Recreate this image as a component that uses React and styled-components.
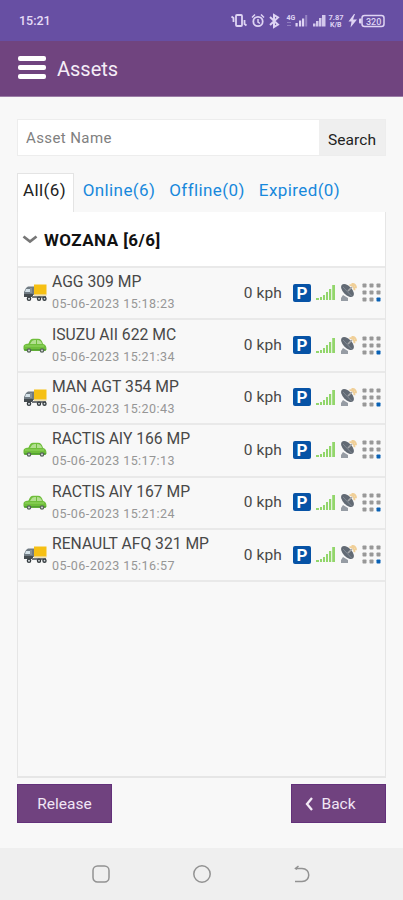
import React from "react";
import styled, { createGlobalStyle } from "styled-components";

const GlobalStyle = createGlobalStyle`
  * { box-sizing: border-box; }
  body { margin: 0; background: #f8f8f8; font-family: Roboto, "Liberation Sans", sans-serif; }
  button, input { font-family: inherit; border-radius: 0; margin: 0; }
  svg { display: block; flex: none; }
`;

const Screen = styled.div`
  width: 403px;
  height: 900px;
  display: flex;
  flex-direction: column;
  background: #f8f8f8;
  overflow: hidden;
`;

const StatusBar = styled.div`
  height: 41px;
  flex: none;
  background: #674fa3;
  color: #e6dcf7;
  display: flex;
  align-items: center;
  justify-content: space-between;
  padding: 0 17px 0 19px;
`;

const Clock = styled.span`
  font-size: 12.5px;
  line-height: 16px;
  font-weight: 500;
`;

const Header = styled.header`
  height: 56px;
  flex: none;
  background: #70447f;
  border-bottom: 1px solid #9b7da6;
  display: flex;
  align-items: center;
  gap: 11px;
  padding: 0 18px;
`;

const MenuButton = styled.button`
  width: 28px;
  padding: 0;
  border: 0;
  background: none;
  display: grid;
  gap: 4px;
  margin-top: -2px;
`;

const MenuBar = styled.span`
  height: 5px;
  border-radius: 2px;
  background: #fff;
`;

const Title = styled.h1`
  margin: 0;
  font-size: 20px;
  line-height: 24px;
  font-weight: 400;
  color: #f5edf7;
`;

const Content = styled.main`
  flex: 1;
  min-height: 0;
  display: flex;
  flex-direction: column;
  padding: 22px 17px 25px;
`;

const SearchBar = styled.div`
  height: 37px;
  flex: none;
  display: flex;
  border: 1px solid #ededed;
`;

const SearchInput = styled.input`
  flex: 1;
  min-width: 0;
  border: 0;
  padding: 0 8px 0;
  background: #fff;
  font-size: 15px;
  letter-spacing: 0.4px;
  color: #444;
  &::placeholder { color: #808080; opacity: 1; }
`;

const SearchButton = styled.button`
  width: 66px;
  border: 0;
  padding: 5px 0 0;
  background: #efefef;
  color: #222;
  font-size: 15.5px;
  letter-spacing: 0.1px;
`;

const Tabs = styled.nav`
  display: flex;
  flex: none;
  height: 39px;
  margin-top: 17px;
`;

const Tab = styled.button`
  width: ${(p) => p.$width}px;
  border: 1px solid ${(p) => (p.$active ? "#e4e4e4" : "transparent")};
  border-bottom: 0;
  padding: 0 ${(p) => (p.$active ? 2 : 0)}px 6px 0;
  background: ${(p) => (p.$active ? "#fff" : "transparent")};
  color: ${(p) => (p.$active ? "#222" : "#1788dc")};
  font-size: 17px;
  letter-spacing: 0.4px;
  white-space: nowrap;
`;

const Panel = styled.section`
  flex: 1;
  min-height: 0;
  border: 1px solid #e6e6e6;
  border-top: 0;
  border-bottom-width: 2px;
`;

const GroupHeader = styled.div`
  height: 54px;
  background: #fff;
  display: flex;
  align-items: center;
  gap: 6px;
  padding: 1px 4px 0;
`;

const GroupName = styled.span`
  font-size: 17px;
  line-height: 20px;
  font-weight: 700;
  letter-spacing: 0.45px;
  color: #111;
`;

const Row = styled.div`
  height: 52.4px;
  border-top: 2px solid #e9e9e9;
  display: flex;
  align-items: center;
  padding: 0 4px 0 5px;
`;

const RowEnd = styled.div`
  height: 2px;
  background: #e9e9e9;
`;

const Vehicle = styled.div`
  width: 24px;
  margin-right: 5px;
`;

const Details = styled.div`
  flex: 1;
  min-width: 0;
  white-space: nowrap;
`;

const AssetName = styled.div`
  font-size: 15.7px;
  line-height: 22px;
  margin-top: -2px;
  color: #484848;
`;

const Timestamp = styled.div`
  font-size: 12.5px;
  line-height: 19px;
  letter-spacing: 0.45px;
  margin-top: 1px;
  color: #969696;
`;

const Speed = styled.span`
  font-size: 15.5px;
  letter-spacing: 0.1px;
  line-height: 20px;
  margin: -1px 11px 0 0;
  color: #484848;
`;

const Indicators = styled.div`
  display: flex;
  align-items: center;
  gap: 5px;
  margin-top: -1px;
`;

const Parking = styled.span`
  width: 18px;
  height: 18px;
  border-radius: 2px;
  background: #0753a6;
  color: #fff;
  font-size: 17px;
  line-height: 18px;
  font-weight: 700;
  text-align: center;
`;

const Actions = styled.div`
  display: flex;
  justify-content: space-between;
  flex: none;
  margin-top: 6px;
`;

const ActionButton = styled.button`
  width: 95px;
  height: 39px;
  border: 1px solid #63317a;
  padding: 0;
  background: #70427f;
  color: #f1e6f5;
  font-size: 15.5px;
  display: flex;
  align-items: center;
  justify-content: center;
  gap: 8px;
`;

const BackLabel = styled.span`
  margin-right: 16px;
`;

const SystemNav = styled.footer`
  height: 52px;
  flex: none;
  background: #efefef;
  display: flex;
  justify-content: center;
  align-items: center;
  gap: 80px;
`;

function StatusIcons() {
  return (
    <svg width="156" height="20" viewBox="230 11 156 20" fill="none" stroke="#ded4f3" strokeWidth="1.5" fontFamily="Roboto, sans-serif">
      <rect x="236" y="15" width="6" height="11" rx="1" strokeWidth="1.8" />
      <path d="M231.500 16.500l2 1.500v4M246.500 25.500l-2-1.500v-4" strokeWidth="1.8" />
      <circle cx="258" cy="21.500" r="4.700" strokeWidth="1.800" />
      <path d="M258 19v3l2 1.500M252 17.500l3-3M264 17.500l-3-3" />
      <path d="M270 17l8 7.500-4 2.500V15l4 2.500-8 7.500" strokeWidth="2" />
      <g fill="#ded4f3" stroke="none">
        <text x="286.500" y="20" fontSize="7" fontWeight="700">4G</text>
        <path d="M295.500 23h2.200v3.500h-2.200zM299 20.500h2.200v6H299zM302 18.500h2.200v8H302z" />
        <path d="M305.200 15h2v11.500h-2z" opacity=".4" />
        <path d="M287 22h4v1h-4zM287 25h4v1h-4z" opacity=".35" />
        <path d="M313 23.500h2.500v3H313zM316 21h2.500v5.500H316zM319 18h2.500v8.500H319zM322 15h3.500v11.500H322z" opacity=".9" />
        <text x="328.500" y="20" fontSize="7.500" fontWeight="700">7.87</text>
        <text x="330" y="27" fontSize="7" fontWeight="700">K/B</text>
        <path d="M354 14l-5.500 7.500h3l-1 6 6.500-8h-4l2-5.500z" />
        <rect x="359" y="18.500" width="2.500" height="5" rx="1" />
        <text x="366" y="24.500" fontSize="9" fontWeight="500">320</text>
      </g>
      <rect x="362" y="15.500" width="22" height="11" rx="2.500" />
    </svg>
  );
}

function Truck() {
  return (
    <svg width="24" height="18" viewBox="0 0 24 18">
      <path d="M3 4l2-1.500h6V11H1V8z" fill="#707b83" />
      <path d="M3 5h4v3H2z" fill="#d4e1e8" />
      <path d="M7.500 4h1v5h-1z" fill="#a4adb3" />
      <path d="M1 10h9v3H1z" fill="#454c50" />
      <path d="M9 12h14v2H9z" fill="#73777a" />
      <path d="M11 .5h12.500v10H11z" fill="#f6c014" />
      <path d="M11 10.500h12.500v1H11z" fill="#e4ca77" />
      <g fill="#333a3e"><circle cx="6" cy="14.700" r="2.300" /><circle cx="16" cy="14.700" r="2.200" /><circle cx="21.500" cy="14.700" r="2.200" /></g>
      <g fill="#d7dde0"><circle cx="6" cy="14.700" r="1" /><circle cx="16" cy="14.700" r=".9" /><circle cx="21.500" cy="14.700" r=".9" /></g>
    </svg>
  );
}

function Car() {
  return (
    <svg width="24" height="16" viewBox="0 0 24 16">
      <path d="M.5 9c0-3 3-3 5-3.500C7 2 8 .8 10 .8h5c3 0 4 2 5 5 3 1 3.500 3 3.500 6L22 13H2C0 12 .5 10 .5 9z" fill="#6fbe3b" />
      <path d="M7 6l2-3c1-1 2-1 4-1v4zM14 2c3 0 4 1 5 4h-5z" fill="#b3df91" />
      <path d="M2 8h19" stroke="#96d765" />
      <path d="M1 11h22v1.500H1z" fill="#54a034" />
      <g fill="#56625a"><circle cx="6" cy="12.500" r="2.300" /><circle cx="19" cy="12.500" r="2.300" /></g>
      <g fill="#cad0cc"><circle cx="6" cy="12.500" r="1.100" /><circle cx="19" cy="12.500" r="1.100" /></g>
    </svg>
  );
}

function SignalBars() {
  return (
    <svg width="19" height="17" viewBox="0 0 19 17" fill="#92d66b">
      <path d="M0 14h3v2H0zM4 13h2v3H4zM7 11h2v5H7zM10 8h2v8h-2zM13 5h2.200v11H13zM16.200 1H19v15h-2.800z" />
    </svg>
  );
}

function Satellite() {
  return (
    <svg width="17" height="19" viewBox="0 0 17 19">
      <path d="M1 15l2-3 5 3v3H1z" fill="#969ca4" />
      <ellipse cx="7.500" cy="7.500" rx="8" ry="4.400" transform="rotate(46 7.500 7.500)" fill="#626a74" />
      <path d="M3 4l8.500 9" stroke="#818a94" strokeWidth="1" />
      <path d="M8 8l4-4" stroke="#a5a7aa" strokeWidth="1.700" />
      <path d="M9.500 2.200c3-.5 5 1.500 5 5M11.500 .8c3 0 4.500 1.500 4.500 4.500" fill="none" stroke="#f0cf97" strokeWidth="1.900" />
    </svg>
  );
}

function MoreGrid() {
  return (
    <svg width="19" height="19" viewBox="0 0 19 19">
      {[0, 1, 2].flatMap((y) => [0, 1, 2].map((x) => (
        <rect key={`${x}-${y}`} x={0.5 + x * 7} y={0.5 + y * 7} width="4" height="4" rx=".8" fill={x === 2 && y === 2 ? "#0861b5" : "#989898"} />
      )))}
    </svg>
  );
}

const assets = [
  { name: "AGG 309 MP", time: "05-06-2023 15:18:23", truck: true },
  { name: "ISUZU AII 622 MC", time: "05-06-2023 15:21:34" },
  { name: "MAN AGT 354 MP", time: "05-06-2023 15:20:43", truck: true },
  { name: "RACTIS AIY 166 MP", time: "05-06-2023 15:17:13" },
  { name: "RACTIS AIY 167 MP", time: "05-06-2023 15:21:24" },
  { name: "RENAULT AFQ 321 MP", time: "05-06-2023 15:16:57", truck: true },
];

function AssetRow({ asset }) {
  return (
    <Row>
      <Vehicle>{asset.truck ? <Truck /> : <Car />}</Vehicle>
      <Details>
        <AssetName>{asset.name}</AssetName>
        <Timestamp>{asset.time}</Timestamp>
      </Details>
      <Speed>0 kph</Speed>
      <Indicators>
        <Parking>P</Parking>
        <SignalBars />
        <Satellite />
        <MoreGrid />
      </Indicators>
    </Row>
  );
}

export default function App() {
  return (
    <>
      <GlobalStyle />
      <Screen>
        <StatusBar><Clock>15:21</Clock><StatusIcons /></StatusBar>
        <Header>
          <MenuButton aria-label="Menu"><MenuBar /><MenuBar /><MenuBar /></MenuButton>
          <Title>Assets</Title>
        </Header>
        <Content>
          <SearchBar><SearchInput placeholder="Asset Name" /><SearchButton>Search</SearchButton></SearchBar>
          <Tabs>
            <Tab $active $width={57}>All(6)</Tab>
            <Tab $width={90}>Online(6)</Tab>
            <Tab $width={86}>Offline(0)</Tab>
            <Tab $width={99}>Expired(0)</Tab>
          </Tabs>
          <Panel>
            <GroupHeader>
              <svg width="16" height="11" viewBox="0 0 16 11" fill="none" stroke="#777" strokeWidth="2.800"><path d="M1.500 2.500L8 7.500l6.500-5" /></svg>
              <GroupName>WOZANA [6/6]</GroupName>
            </GroupHeader>
            {assets.map((a) => <AssetRow key={a.name} asset={a} />)}
            <RowEnd />
          </Panel>
          <Actions>
            <ActionButton>Release</ActionButton>
            <ActionButton>
              <svg width="8" height="14" viewBox="0 0 8 14" fill="none" stroke="#f4eaf7" strokeWidth="2.300"><path d="M7 1L2 7l5 6" /></svg>
              <BackLabel>Back</BackLabel>
            </ActionButton>
          </Actions>
        </Content>
        <SystemNav>
          <svg width="20" height="20" viewBox="0 0 20 20" fill="none" stroke="#929292" strokeWidth="1.500"><rect x="1" y="2" width="16" height="16" rx="4.500" /></svg>
          <svg width="20" height="20" viewBox="0 0 20 20" fill="none" stroke="#929292" strokeWidth="1.500"><circle cx="10" cy="10" r="8.200" /></svg>
          <svg width="20" height="20" viewBox="0 0 20 20" fill="none" stroke="#929292" strokeWidth="1.500"><path d="M3 17.500h7c9 0 9-13 0-13H3M6.500 2L3.500 4.500l1.500 1" /></svg>
        </SystemNav>
      </Screen>
    </>
  );
}
